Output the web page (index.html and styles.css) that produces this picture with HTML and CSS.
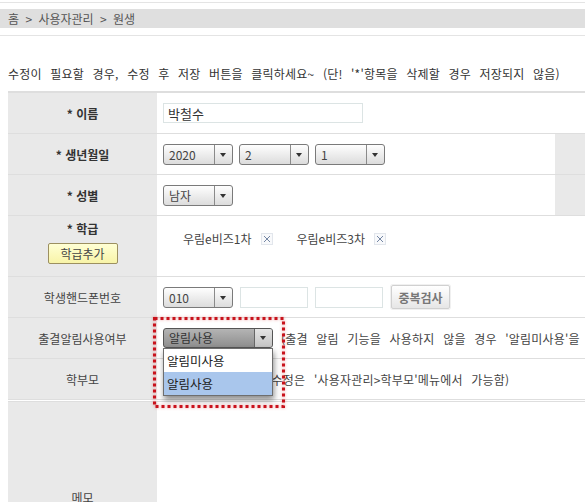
FILE: index.html
```html
<!DOCTYPE html>
<html lang="ko">
<head>
    <meta charset="UTF-8">
    <title>원생 수정</title>
    <link rel="stylesheet" href="styles.css">
</head>
<body>
    <div class="topline"></div>
    <div class="location">홈 &gt; 사용자관리 &gt; 원생</div>
    <div class="subline"></div>
    <p class="notice">수정이 필요할 경우, 수정 후 저장 버튼을 클릭하세요~ (단! '*'항목을 삭제할 경우 저장되지 않음)</p>

    <div class="form">
        <div class="row">
            <div class="label required">* 이름</div>
            <div class="value">
                <input type="text" class="text-input name-input" value="박철수">
            </div>
        </div>
        <div class="row">
            <div class="label required">* 생년월일</div>
            <div class="value">
                <div class="select"><span class="select-text">2020</span><span class="select-arrow"></span></div>
                <div class="select"><span class="select-text">2</span><span class="select-arrow"></span></div>
                <div class="select"><span class="select-text">1</span><span class="select-arrow"></span></div>
            </div>
            <div class="side"></div>
        </div>
        <div class="row">
            <div class="label required">* 성별</div>
            <div class="value">
                <div class="select"><span class="select-text">남자</span><span class="select-arrow"></span></div>
            </div>
            <div class="side"></div>
        </div>
        <div class="row row-class">
            <div class="label label-stack required">
                <span>* 학급</span>
                <button class="btn-yellow">학급추가</button>
            </div>
            <div class="value value-top">
                <span class="tag">우림e비즈1차<span class="tag-del"><svg width="10" height="10" viewBox="0 0 10 10"><path d="M2 2L8 8M8 2L2 8" stroke="#7486a4" stroke-width="1"/></svg></span></span>
                <span class="tag">우림e비즈3차<span class="tag-del"><svg width="10" height="10" viewBox="0 0 10 10"><path d="M2 2L8 8M8 2L2 8" stroke="#7486a4" stroke-width="1"/></svg></span></span>
            </div>
        </div>
        <div class="row">
            <div class="label">학생핸드폰번호</div>
            <div class="value phone">
                <div class="select"><span class="select-text">010</span><span class="select-arrow"></span></div>
                <input type="text" class="text-input phone-input">
                <input type="text" class="text-input phone-input">
                <button class="btn-gray">중복검사</button>
            </div>
        </div>
        <div class="row row-alarm">
            <div class="label">출결알림사용여부</div>
            <div class="value">
                <div class="select-wrap">
                    <div class="select select-open"><span class="select-text">알림사용</span><span class="select-arrow"></span></div>
                    <ul class="select-list">
                        <li>알림미사용</li>
                        <li class="selected">알림사용</li>
                    </ul>
                </div>
                <span class="hint">(출결 알림 기능을 사용하지 않을 경우 '알림미사용'을 선택하세요)</span>
            </div>
            <svg class="mark" width="132" height="91" viewBox="0 0 132 91">
                <rect x="1.5" y="1.5" width="129" height="88" fill="none" stroke="#c8121c" stroke-width="3" stroke-dasharray="3 3"/>
            </svg>
        </div>
        <div class="row row-parent">
            <div class="label">학부모</div>
            <div class="value">
                <span class="hint">(학부모 추가 정보 수정은 '사용자관리&gt;학부모'메뉴에서 가능함)</span>
            </div>
        </div>
        <div class="row row-memo">
            <div class="label">메모</div>
            <div class="value"></div>
        </div>
    </div>
</body>
</html>
```

FILE: styles.css
```css
html, body {
    overflow: hidden;
}
body {
    margin: 0;
    width: 640px;
    font-family: 'Noto Sans CJK KR', 'Noto Sans', sans-serif;
    font-size: 12px;
    color: #444;
    word-spacing: 5px;
    letter-spacing: 0.2px;
}
.topline {
    margin-top: 2px;
    border-top: 1px solid #e4e4e4;
}
.location {
    margin-top: 6px;
    height: 19px;
    line-height: 19px;
    background-color: #dfdfdf;
    padding-left: 8px;
    color: #555;
    word-spacing: 3px;
    letter-spacing: 0;
}
.subline {
    margin-top: 7px;
    border-top: 1px solid #e4e4e4;
}
.notice {
    margin: 29px 0 8px;
    padding-left: 8px;
    line-height: 18px;
    color: #333;
    white-space: nowrap;
}
.form {
    margin-left: 8px;
    width: 620px;
    border-top: 2px solid #dedede;
}
.row {
    display: flex;
    height: 41px;
    box-sizing: border-box;
    border-bottom: 1px solid #dedede;
}
.label {
    width: 149px;
    flex-shrink: 0;
    background-color: #e9e9e9;
    display: flex;
    align-items: center;
    justify-content: center;
    color: #444;
    word-spacing: 0;
    letter-spacing: 0;
}
.label.required {
    font-weight: 700;
    color: #333;
}
.value {
    flex: 1;
    display: flex;
    align-items: center;
    gap: 6px;
    padding-left: 6px;
    white-space: nowrap;
}
.side {
    width: 73px;
    background-color: #e9e9e9;
}
.text-input {
    box-sizing: border-box;
    height: 20px;
    border: 1px solid #dce4e4;
    padding: 0 4px;
    font-family: inherit;
    font-size: 13px;
    color: #333;
    outline: none;
}
.name-input {
    width: 200px;
}
.select {
    display: flex;
    width: 70px;
    height: 21px;
    box-sizing: border-box;
    border: 1px solid #7a7a7a;
    border-radius: 3px;
    background: linear-gradient(#fefefe, #dcdcdc);
    color: #444;
    letter-spacing: 0;
}
.select-text {
    flex: 1;
    padding-left: 5px;
    line-height: 19px;
}
.select-arrow {
    width: 17px;
    border-left: 1px solid #8a8a8a;
    position: relative;
}
.select-arrow::after {
    content: '';
    position: absolute;
    left: 5px;
    top: 8px;
    border-top: 4px solid #333;
    border-left: 3.5px solid transparent;
    border-right: 3.5px solid transparent;
}
.row-class {
    height: 61px;
}
.label-stack {
    flex-direction: column;
    justify-content: flex-start;
    padding-top: 4px;
    gap: 6px;
    box-sizing: border-box;
}
.btn-yellow {
    width: 70px;
    height: 21px;
    padding: 0;
    border: 1px solid #9c9060;
    border-radius: 2px;
    background: linear-gradient(#ffffd4, #f8f4a8);
    font-family: inherit;
    font-size: 12px;
    color: #444;
}
.value-top {
    align-items: flex-start;
    padding-left: 26px;
    padding-top: 14px;
    gap: 24px;
}
.tag {
    display: inline-flex;
    align-items: center;
    gap: 9px;
    color: #444;
    word-spacing: 0;
    letter-spacing: 0;
    line-height: 17px;
}
.tag-del {
    display: inline-flex;
    align-items: center;
    justify-content: center;
    width: 12px;
    height: 12px;
    box-sizing: border-box;
    border: 1px solid #e2e6ec;
    background-color: #f8f9fb;
}
.phone {
    gap: 0;
}
.phone-input {
    width: 68px;
    height: 21px;
    margin-left: 7px;
}
.btn-gray {
    margin-left: 8px;
    width: 59px;
    height: 24px;
    padding: 0;
    border: 1px solid #d0d0d0;
    border-radius: 2px;
    background: linear-gradient(#ffffff, #e6e6e6);
    box-shadow: 0 0 0 1px #f0f0f0;
    font-family: inherit;
    font-size: 12px;
    font-weight: 700;
    color: #777;
    letter-spacing: 0;
}
.row-alarm {
    position: relative;
}
.value .hint {
    color: #444;
}
.row-alarm .value {
    gap: 8px;
}
.select-wrap {
    position: relative;
}
.select-open {
    width: 110px;
    height: 20px;
    border-color: #555;
    background: linear-gradient(#b4b4b4, #8e8e8e);
    color: #333;
}
.select-open .select-text {
    line-height: 18px;
}
.select-open .select-arrow {
    border-left-color: #666;
    background: linear-gradient(#e4e4e4, #c4c4c4);
    border-radius: 0 2px 2px 0;
}
.select-open .select-arrow::after {
    top: 7px;
}
.select-list {
    position: absolute;
    left: 0;
    top: 100%;
    z-index: 2;
    width: 110px;
    box-sizing: border-box;
    margin: 0;
    padding: 0;
    list-style: none;
    background-color: #fff;
    border: 1px solid #6e6e6e;
    box-shadow: 1px 4px 6px rgba(0, 0, 0, 0.45);
}
.select-list li {
    height: 23px;
    line-height: 23px;
    padding-left: 3px;
    font-size: 12.5px;
    color: #222;
    word-spacing: 0;
    letter-spacing: 0;
}
.select-list li.selected {
    background-color: #a9c6ec;
}
.mark {
    position: absolute;
    left: 145px;
    top: -1px;
    z-index: 3;
    filter: drop-shadow(0 0 1.5px rgba(220, 40, 40, 0.5));
}
.row-parent {
    height: 43px;
    border-bottom: 3px double #dedede;
}
.row-memo {
    height: 190px;
    border-bottom: none;
}
```
